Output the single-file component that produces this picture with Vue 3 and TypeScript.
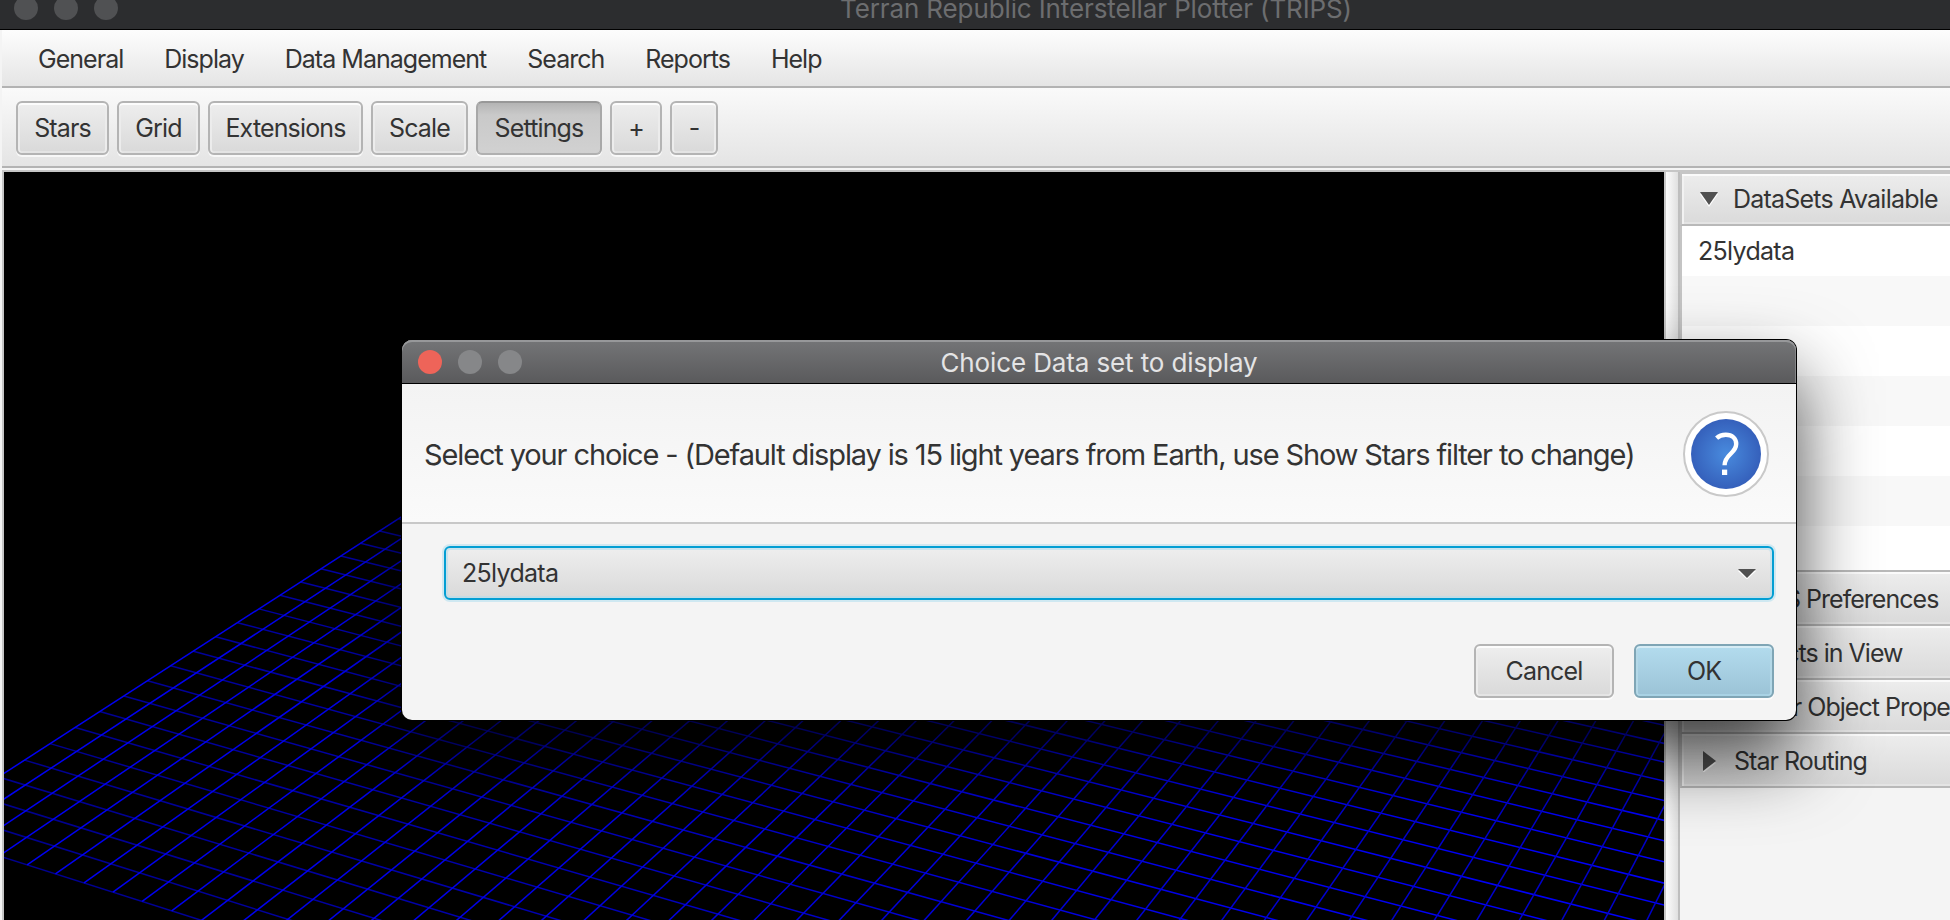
<script setup lang="ts">
interface ToolButton {
  label: string
  width: number
  pressed?: boolean
}

interface GridLine {
  x1: number
  y1: number
  x2: number
  y2: number
}

const menus: string[] = ['General', 'Display', 'Data Management', 'Search', 'Reports', 'Help']

const tools: ToolButton[] = [
  { label: 'Stars', width: 93 },
  { label: 'Grid', width: 83 },
  { label: 'Extensions', width: 155 },
  { label: 'Scale', width: 97 },
  { label: 'Settings', width: 126, pressed: true },
  { label: '+', width: 52 },
  { label: '-', width: 48 },
]

const dataSets: string[] = ['25lydata', '', '', '', '', '', '']
const panes: string[] = ['TRIPS Preferences', 'Objects in View', 'Stellar Object Properties', 'Star Routing']

// Perspective projection of the galactic plane onto the plot area.
const VIEW_LEFT = 4
const VIEW_TOP = 172
const HORIZON = -864.4
const COLUMNS = 48
const ROWS = 30

function project(u: number, v: number): [number, number] {
  const w = 5.9029e-4 - 0.02998e-4 * u + 0.0632e-4 * v
  const x = (-0.0491 + 0.0162 * u + 0.01606 * v) / w
  const y = 1 / w + HORIZON
  return [x - VIEW_LEFT, y - VIEW_TOP]
}

function line(from: [number, number], to: [number, number]): GridLine {
  return { x1: from[0], y1: from[1], x2: to[0], y2: to[1] }
}

const columnLines: GridLine[] = Array.from({ length: COLUMNS + 1 }, (_, u) =>
  line(project(u, 0), project(u, ROWS)),
)
const rowLines: GridLine[] = Array.from({ length: ROWS + 1 }, (_, v) =>
  line(project(0, v), project(COLUMNS, v)),
)
</script>

<template>
  <div class="window">
    <header class="titlebar">
      <div class="lights">
        <i class="light"></i>
        <i class="light"></i>
        <i class="light"></i>
      </div>
      <span class="window-title">Terran Republic Interstellar Plotter (TRIPS)</span>
    </header>

    <nav class="menubar">
      <span v-for="menu in menus" :key="menu" class="menu">{{ menu }}</span>
    </nav>

    <div class="toolbar">
      <button
        v-for="tool in tools"
        :key="tool.label"
        class="btn"
        :class="{ pressed: tool.pressed }"
        :style="{ width: tool.width + 'px' }"
      >
        {{ tool.label }}
      </button>
    </div>

    <main class="split">
      <svg class="plot" width="1660" height="748" viewBox="0 0 1660 748">
        <defs>
          <linearGradient id="rowInk" gradientUnits="userSpaceOnUse" x1="0" y1="0" x2="1660" y2="0">
            <stop offset="0" stop-color="#00008c" />
            <stop offset="0.35" stop-color="#0000b4" />
            <stop offset="0.75" stop-color="#0000f0" />
            <stop offset="1" stop-color="#0000fa" />
          </linearGradient>
          <linearGradient id="columnInk" gradientUnits="userSpaceOnUse" x1="0" y1="0" x2="1660" y2="0">
            <stop offset="0" stop-color="#0000f4" />
            <stop offset="1" stop-color="#0000c8" />
          </linearGradient>
        </defs>
        <g stroke="url(#rowInk)" stroke-width="1.5">
          <line v-for="(l, i) in rowLines" :key="i" v-bind="l" />
        </g>
        <g stroke="url(#columnInk)" stroke-width="1.5">
          <line v-for="(l, i) in columnLines" :key="i" v-bind="l" />
        </g>
      </svg>
      <div class="divider"></div>
      <aside class="side">
        <div class="pane-head first">
          <svg class="arrow" width="22" height="18" viewBox="0 0 22 18">
            <path d="M2 4H20L11 17Z" fill="#fff" />
            <path d="M2 2H20L11 15Z" fill="#515151" />
          </svg>
          <span>DataSets Available</span>
        </div>
        <div class="list">
          <div v-for="(name, i) in dataSets" :key="i" class="row">{{ name }}</div>
        </div>
        <div v-for="pane in panes" :key="pane" class="pane-head">
          <svg class="arrow" width="22" height="22" viewBox="0 0 22 22">
            <path d="M4 3V23L17 13Z" fill="#fff" />
            <path d="M4 1V21L17 11Z" fill="#515151" />
          </svg>
          <span>{{ pane }}</span>
        </div>
      </aside>
    </main>

    <section class="dialog">
      <div class="dialog-title">
        <div class="lights">
          <i class="light close"></i>
          <i class="light"></i>
          <i class="light"></i>
        </div>
        <span>Choice Data set to display</span>
      </div>
      <div class="dialog-head">
        <p class="prompt">
          Select your choice - (Default display is 15 light years from Earth, use Show Stars filter to change)
        </p>
        <svg class="question" width="86" height="86" viewBox="0 0 86 86">
          <defs>
            <radialGradient id="disc">
              <stop offset="0" stop-color="#498bde" />
              <stop offset="1" stop-color="#3560bb" />
            </radialGradient>
          </defs>
          <circle cx="43" cy="43" r="42" fill="#fff" stroke="#c9c9c9" stroke-width="2" />
          <circle cx="43" cy="43" r="35" fill="url(#disc)" />
          <path
            d="M33.6 27.2C36 24.9 39 23.8 42.8 23.8C49.3 23.8 53.2 27.4 53.2 33C53.2 42.5 41.6 43.2 41.6 54.2"
            fill="none"
            stroke="#fff"
            stroke-width="4.4"
          />
          <rect x="39" y="58.6" width="5.2" height="5.4" fill="#fff" />
        </svg>
      </div>
      <div class="dialog-body">
        <div class="combo">
          <span>25lydata</span>
          <svg width="20" height="12" viewBox="0 0 20 12">
            <path d="M1 4H19L10 12.5Z" fill="#fff" />
            <path d="M1 2H19L10 11Z" fill="#515151" />
          </svg>
        </div>
        <div class="actions">
          <button class="btn action">Cancel</button>
          <button class="btn action ok">OK</button>
        </div>
      </div>
    </section>
  </div>
</template>

<style>
body {
  margin: 0;
  background: #f4f4f4;
}
</style>

<style scoped>
.window {
  position: relative;
  display: flex;
  flex-direction: column;
  width: 1950px;
  height: 920px;
  overflow: hidden;
  background: #f4f4f4;
  color: #333;
  font-family: Inter, 'Liberation Sans', sans-serif;
  font-size: 25px;
  letter-spacing: -0.8px;
  white-space: nowrap;
}

.titlebar {
  position: relative;
  flex: none;
  height: 29px;
  background: #2c2d2f;
  border-bottom: 1px solid #000;
}

.lights {
  display: flex;
  gap: 16px;
}

.light {
  width: 24px;
  height: 24px;
  border-radius: 50%;
  background: #505153;
}

.titlebar .lights {
  margin: -4px 0 0 14px;
}

.window-title {
  position: absolute;
  left: 840px;
  top: -16px;
  line-height: 50px;
  color: #6c6d6f;
  font-size: 26px;
  letter-spacing: -0.12px;
}

.menubar {
  display: flex;
  flex: none;
  align-items: center;
  gap: 40.9px;
  height: 58px;
  margin-left: 2px;
  padding: 1px 0 0 36px;
  box-sizing: border-box;
  background: linear-gradient(#fdfdfd, #e5e5e5);
  border-bottom: 2px solid #b3b3b3;
  letter-spacing: -0.97px;
}

.toolbar {
  display: flex;
  flex: none;
  align-items: flex-start;
  gap: 8px;
  height: 80px;
  margin-left: 2px;
  padding: 13px 0 0 14px;
  box-sizing: border-box;
  background: linear-gradient(#fafafa, #e4e4e4);
  border-bottom: 2px solid #b3b3b3;
}

.btn {
  height: 54px;
  padding: 0;
  border: 2px solid #b4b4b4;
  border-radius: 6px;
  background: linear-gradient(#eeeeee, #d9d9d9);
  box-shadow: inset 0 2px #fcfcfc, inset 2px 0 #ececec, inset -2px 0 #ececec, inset 0 -2px #e4e4e4,
    0 2px rgba(255, 255, 255, 0.7);
  color: #333;
  font: inherit;
  line-height: 50px;
  letter-spacing: -0.85px;
  text-align: center;
}

.btn.pressed {
  border-color: #989898 #a8a8a8 #b0b0b0;
  background: linear-gradient(#b4b4b4, #c9c9c9 24%, #d1d1d1);
  box-shadow: 0 2px rgba(255, 255, 255, 0.7);
}

.split {
  display: flex;
  flex: 1;
  margin: 2px 0 0 2px;
  border-top: 2px solid #c6c6c6;
  border-left: 2px solid #c6c6c6;
  min-height: 0;
}

.plot {
  flex: none;
  display: block;
  background: #000;
}

.divider {
  flex: none;
  width: 12px;
  border-left: 2px solid #c8c8c8;
  border-right: 2px solid #bebebe;
  background: linear-gradient(90deg, #fcfcfc, #e0e0e0);
}

.side {
  flex: 1;
  min-width: 0;
  overflow: hidden;
  padding-top: 2px;
  background: linear-gradient(#c6c6c6 2px, #f4f4f4 2px);
}

.pane-head {
  display: flex;
  align-items: center;
  gap: 13px;
  height: 54px;
  padding: 2px 0 0 17px;
  box-sizing: border-box;
  border-left: 2px solid #c4c4c4;
  border-bottom: 2px solid #b9b9b9;
  background: linear-gradient(#ededed, #dadada);
  box-shadow: inset 0 2px #fbfbfb, inset 2px 0 #f2f2f2, inset 0 -2px #e4e4e4;
  letter-spacing: -0.98px;
}

.pane-head.first {
  height: 52px;
  padding: 0 0 0 16px;
  gap: 13px;
  letter-spacing: -0.78px;
}

.arrow {
  flex: none;
}

.list {
  height: 346px;
  box-sizing: border-box;
  overflow: hidden;
  border-left: 2px solid #c4c4c4;
  border-bottom: 2px solid #b9b9b9;
}

.row {
  height: 50px;
  padding-left: 16px;
  line-height: 50px;
  letter-spacing: -0.7px;
  background: #fff;
}

.row:nth-child(even) {
  background: #f8f8f8;
}

.dialog {
  position: absolute;
  left: 402px;
  top: 340px;
  width: 1394px;
  height: 380px;
  border-radius: 10px;
  background: #f4f4f4;
  box-shadow: 0 0 0 1px #000, 0 36px 76px rgba(0, 0, 0, 0.74);
}

.dialog-title {
  position: relative;
  height: 43px;
  border-bottom: 1px solid #000;
  border-radius: 10px 10px 0 0;
  background: linear-gradient(#747577, #5a5a5c);
  box-shadow: inset 0 2px #97989a, inset -1px 0 #858688;
  color: #e4e4e5;
  font-size: 26px;
  line-height: 45px;
  text-align: center;
  letter-spacing: -0.12px;
}

.dialog-title .lights {
  position: absolute;
  left: 16px;
  top: 10px;
}

.dialog-title .light {
  background: #868789;
}

.dialog-title .light.close {
  background: #ee6459;
}

.dialog-head {
  display: flex;
  align-items: center;
  justify-content: space-between;
  height: 140px;
  padding: 0 27px 0 22px;
  box-sizing: border-box;
  background: linear-gradient(#f3f3f3, #fafafa);
  border-bottom: 2px solid #c8c8c8;
}

.prompt {
  margin: 2px 0 0;
  font-size: 29px;
  letter-spacing: -1.13px;
}

.question {
  flex: none;
  margin-top: 1px;
}

.dialog-body {
  padding: 22px 22px 0 42px;
}

.combo {
  display: flex;
  align-items: center;
  justify-content: space-between;
  height: 54px;
  padding: 0 15px 0 16px;
  box-sizing: border-box;
  border: 2px solid #039ed3;
  border-radius: 6px;
  background: linear-gradient(#eeeeee, #d9d9d9);
  box-shadow: 0 0 0 2px #cfe8f1, inset 0 0 0 2px rgba(178, 222, 238, 0.6);
  letter-spacing: -0.7px;
}

.actions {
  display: flex;
  justify-content: flex-end;
  gap: 20px;
  margin-top: 44px;
}

.action {
  width: 140px;
}

.btn.ok {
  border-color: #7fa5b5;
  background: linear-gradient(#b3dcee, #9bc3d6);
  box-shadow: inset 0 2px #d6ecf5, inset 2px 0 #b4d8e7, inset -2px 0 #b4d8e7, inset 0 -2px #a8d2e4,
    0 2px rgba(255, 255, 255, 0.7);
}
</style>
